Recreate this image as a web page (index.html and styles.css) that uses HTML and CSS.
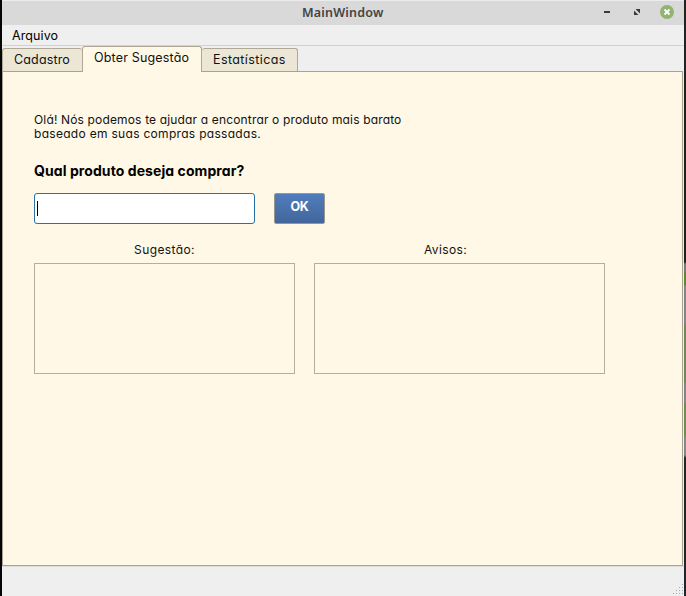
FILE: index.html
```html
<!DOCTYPE html>
<html lang="pt-BR">
<head>
<meta charset="utf-8">
<title>MainWindow</title>
<link rel="stylesheet" href="styles.css">
</head>
<body>
<div class="window">
  <header class="titlebar">
    <span class="title">MainWindow</span>
    <svg class="controls" width="80" height="24" viewBox="0 0 80 24">
      <path d="M8 10h6v2H8z" fill="#3b3b3b"/>
      <path d="M39.5 8H44v4.5zM38 9.5V14h4.500z" fill="#3b3b3b"/>
      <path d="M38 8l6 6" stroke="#d9d9d9" stroke-width="1"/>
      <circle cx="71" cy="11" r="7" fill="#92b372"/>
      <path d="M68.5 8.500l5 5M73.500 8.500l-5 5" stroke="#fff" stroke-width="1.8"/>
    </svg>
  </header>
  <nav class="menubar"><span class="menu">Arquivo</span></nav>
  <div class="tabs">
    <div class="tab first">Cadastro</div>
    <div class="tab active">Obter Sugestão</div>
    <div class="tab last">Estatísticas</div>
  </div>
  <main class="pane">
    <p class="intro"><span class="line1">Olá! Nós podemos te ajudar a encontrar o produto mais barato</span><br><span class="line2">baseado em suas compras passadas.</span></p>
    <h1 class="question">Qual produto deseja comprar?</h1>
    <div class="search">
      <div class="input"><i class="caret"></i></div>
      <button class="ok">OK</button>
    </div>
    <div class="results">
      <section class="result suggestion"><h2>Sugestão:</h2><div class="box"></div></section>
      <section class="result notices"><h2>Avisos:</h2><div class="box"></div></section>
    </div>
  </main>
  <footer class="status">
    <svg width="12" height="12" viewBox="0 0 12 12" fill="#aaa">
      <path d="M10 0h1v1h-1zM7 3h1v1H7zM10 3h1v1h-1zM4 6h1v1H4zM7 6h1v1H7zM10 6h1v1h-1zM1 9h1v1H1zM4 9h1v1H4zM7 9h1v1H7zM10 9h1v1h-1z"/>
    </svg>
  </footer>
</div>
<div class="desktop"></div>
</body>
</html>
```
FILE: styles.css
```css
* { box-sizing: border-box; }
body {
  margin: 0;
  width: 686px;
  height: 596px;
  overflow: hidden;
  display: flex;
  padding-left: 2px;
  background: #050505;
  color: #111;
  font-family: Inter, "Liberation Sans", sans-serif;
  font-feature-settings: "cv11";
  font-size: 12px;
}
.window {
  width: 682px;
  height: 596px;
  display: flex;
  flex-direction: column;
  background: #efefef;
}
.desktop {
  width: 2px;
  background: linear-gradient(#222 0 262px, #777 264px 272px, #5b8a2d 273px 285px, #85868a 286px 320px, #708859 328px 382px, #85868a 384px 402px, #6e8d51 404px 434px, #888 440px 455px, #222628 458px);
}
.titlebar {
  height: 25px;
  display: flex;
  align-items: center;
  justify-content: flex-end;
  background: #d9d9d9;
  border-top: 1px solid #ececec;
}
.title {
  width: 82px;
  margin-right: 212px;
  color: #444;
  font: 600 12.5px/24px "Noto Sans", sans-serif;
  letter-spacing: .2px;
  white-space: nowrap;
}
.controls { margin-right: 8px; }
.menubar {
  height: 21px;
  padding-left: 10px;
  border-bottom: 1px solid #d2d2d2;
  line-height: 21px;
}
.menu { color: #000; font-size: 12.5px; letter-spacing: .1px; }
.tabs {
  height: 25px;
  display: flex;
  align-items: flex-end;
}
.tab {
  height: 23px;
  border: 1px solid #b0a896;
  border-bottom: 0;
  border-radius: 3px 3px 0 0;
  background: #ece6d6;
  line-height: 21px;
  white-space: nowrap;
  font-size: 12.5px;
}
.first { width: 80px; padding-left: 11px; border-right: 0; letter-spacing: .15px; }
.last { width: 96px; padding-left: 11px; border-left: 0; letter-spacing: .4px; }
.active {
  width: 120px;
  height: 26px;
  margin-bottom: -1px;
  padding-left: 11px;
  z-index: 1;
  background: #fff8e6;
  line-height: 22px;
  letter-spacing: .17px;
}
.pane {
  width: 681px;
  height: 495px;
  padding: 41px 0 0 31px;
  border: 1px solid #a8a28e;
  background: #fff8e6;
}
.intro { margin: 0; line-height: 14px; white-space: nowrap; }
.line1 { letter-spacing: .155px; }
.line2 { letter-spacing: .3px; }
.question {
  margin: 20px 0 0;
  color: #000;
  font-size: 14px;
  font-weight: 700;
  line-height: 20px;
  letter-spacing: .08px;
  white-space: nowrap;
}
.search { display: flex; gap: 19px; margin-top: 12px; }
.input {
  width: 221px;
  height: 31px;
  padding: 7px 2px;
  border: 1px solid #2472a8;
  border-radius: 3px;
  background: #fff;
}
.caret { display: block; width: 1px; height: 15px; background: #000; }
.ok {
  width: 51px;
  height: 31px;
  padding: 0 0 3px;
  border: 1px solid #98968e;
  border-radius: 2px;
  background: linear-gradient(#507dbd, #42669b);
  color: #fff;
  font: bold 12.5px/24px Inter, sans-serif;
  letter-spacing: -.3px;
}
.results { display: flex; gap: 19px; margin-top: 18px; }
.suggestion { width: 261px; }
.notices { width: 291px; }
.result h2 { margin: 0; height: 21px; font-size: 12px; font-weight: 400; line-height: 16px; letter-spacing: .4px; text-align: center; }
.notices h2 { padding-right: 28px; }
.box { height: 111px; border: 1px solid #b5ae9e; }
.status {
  flex: 1;
  display: flex;
  align-items: flex-end;
  justify-content: flex-end;
  border-top: 1px solid #dfddd6;
}
```
